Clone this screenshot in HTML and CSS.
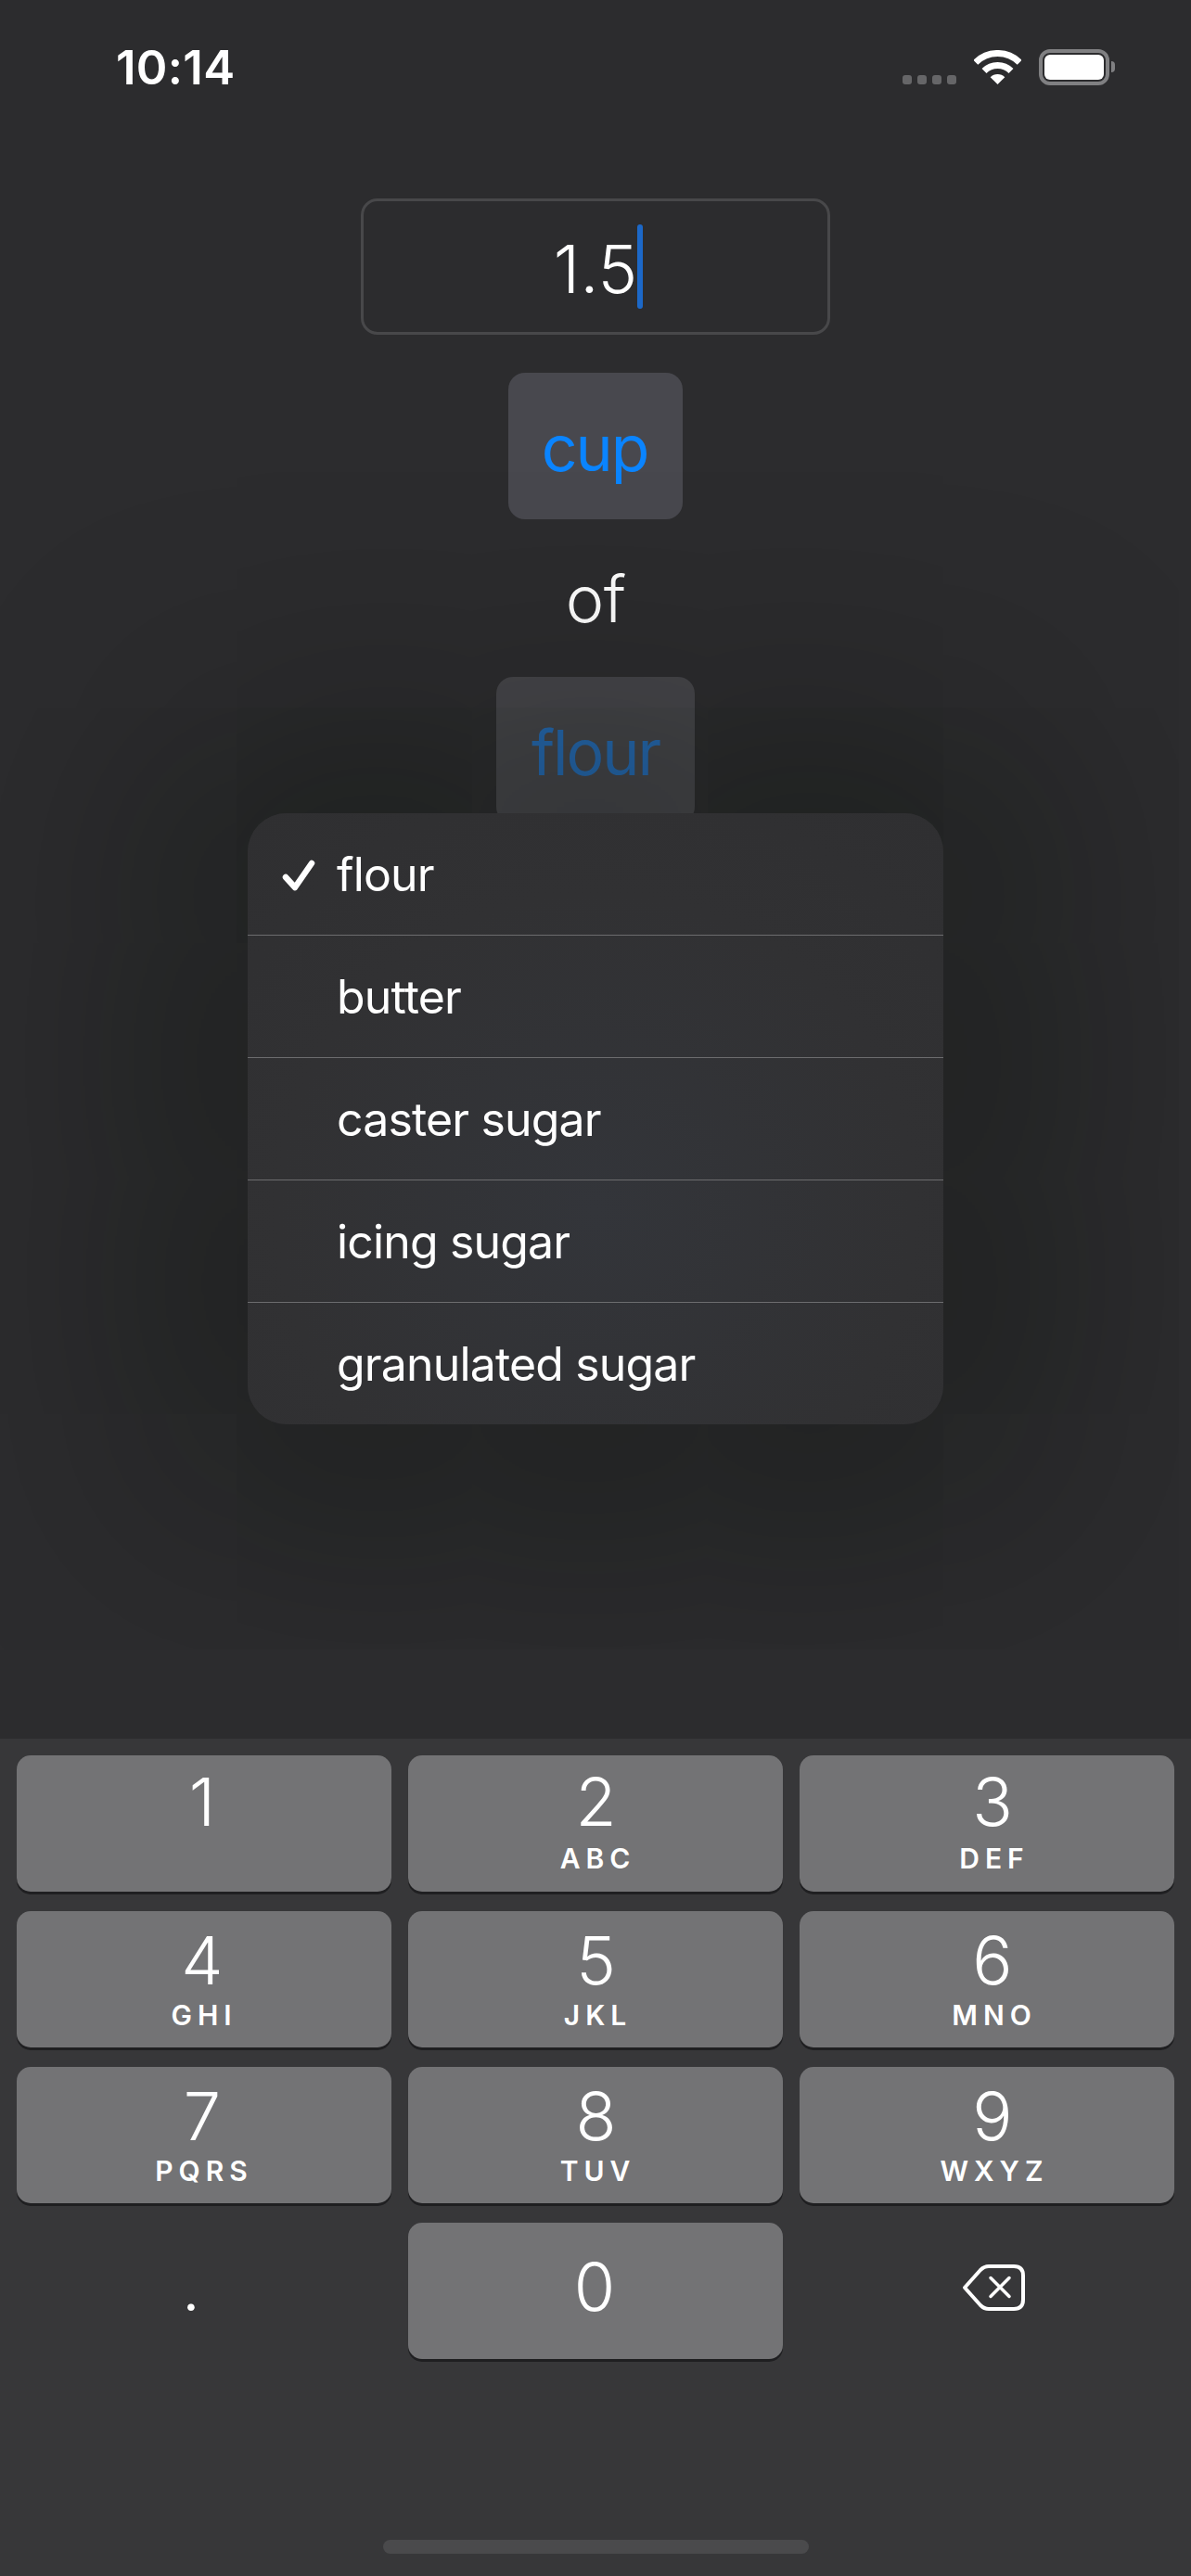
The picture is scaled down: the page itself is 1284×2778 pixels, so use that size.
FILE: index.html
```html
<!DOCTYPE html>
<html lang="en">
<head>
    <meta charset="UTF-8">
    <meta name="viewport" content="width=device-width, initial-scale=1.0">
    <title>Convert ingredient</title>
    <link rel="stylesheet" href="styles.css">
</head>
<body>
    <div class="screen">
        <div class="status-bar">
            <div class="time">10:14</div>
            <div class="status-icons">
                <div class="signal">
                    <span></span><span></span><span></span><span></span>
                </div>
                <svg class="wifi" width="51" height="37" viewBox="0 0 51 37" fill="none">
                    <path d="M1.8 13.3A33.5 33.5 0 0 1 49.2 13.3" stroke="#fff" stroke-width="7"/>
                    <path d="M11 22.5A20.5 20.5 0 0 1 40 22.5" stroke="#fff" stroke-width="7"/>
                    <path d="M25.5 37L17.7 29.2A11 11 0 0 1 33.3 29.2Z" fill="#fff"/>
                </svg>
                <div class="battery"><div class="battery-fill"></div></div>
                <div class="battery-nub"></div>
            </div>
        </div>

        <div class="form">
            <div class="amount-field">
                <span class="amount-value">1.5</span><span class="caret"></span>
            </div>
            <button class="picker-btn">cup</button>
            <div class="of-label">of</div>
            <button class="picker-btn picker-btn-open">flour</button>

            <ul class="menu">
                <li class="menu-row">
                    <svg class="check" width="36" height="34" viewBox="0 0 36 34" fill="none">
                        <path d="M4 19L14 30L32 4" stroke="#fff" stroke-width="6.5" stroke-linecap="round" stroke-linejoin="round"/>
                    </svg>
                    flour
                </li>
                <li class="menu-row">butter</li>
                <li class="menu-row">caster sugar</li>
                <li class="menu-row">icing sugar</li>
                <li class="menu-row">granulated sugar</li>
            </ul>
        </div>

        <div class="keyboard">
            <div class="keys">
                <div class="key"><span class="digit">1</span><span class="letters"></span></div>
                <div class="key key-mid"><span class="digit">2</span><span class="letters">ABC</span></div>
                <div class="key key-end"><span class="digit">3</span><span class="letters">DEF</span></div>
                <div class="key key-low"><span class="digit">4</span><span class="letters">GHI</span></div>
                <div class="key key-low key-mid"><span class="digit">5</span><span class="letters">JKL</span></div>
                <div class="key key-low key-end"><span class="digit">6</span><span class="letters">MNO</span></div>
                <div class="key key-low"><span class="digit">7</span><span class="letters">PQRS</span></div>
                <div class="key key-low key-mid"><span class="digit">8</span><span class="letters">TUV</span></div>
                <div class="key key-low key-end"><span class="digit">9</span><span class="letters">WXYZ</span></div>
                <div class="key key-plain key-dot"><span class="digit">.</span></div>
                <div class="key key-zero"><span class="digit">0</span></div>
                <div class="key key-plain key-back">
                    <svg width="68" height="50" viewBox="0 0 68 50" fill="none">
                        <path d="M3 25L20 6Q24 2 29 2H56Q66 2 66 12V38Q66 48 56 48H29Q24 48 20 44Z" stroke="#fff" stroke-width="4" stroke-linejoin="round"/>
                        <path d="M31 14.5L51 34.5M51 14.5L31 34.5" stroke="#fff" stroke-width="3.5" stroke-linecap="round"/>
                    </svg>
                </div>
            </div>
            <div class="home-bar"></div>
        </div>
    </div>
</body>
</html>
```

FILE: styles.css
```css
* {
    margin: 0;
    padding: 0;
    box-sizing: border-box;
}

body {
    font-family: 'Inter', 'Liberation Sans', sans-serif;
    background-color: #2c2c2e;
    color: #fff;
}

.screen {
    width: 1284px;
    height: 2778px;
    display: flex;
    flex-direction: column;
    overflow: hidden;
}

/* status bar */
.status-bar {
    height: 214px;
    display: flex;
    justify-content: space-between;
    align-items: flex-start;
    padding: 43px 82px 0 125px;
}

.time {
    font-size: 51px;
    font-weight: 600;
    line-height: 60px;
    letter-spacing: 0.3px;
}

.status-icons {
    display: flex;
    align-items: flex-start;
    padding-top: 10px;
}

.signal {
    display: flex;
    gap: 6px;
    margin-top: 28px;
    margin-right: 19px;
}

.signal span {
    width: 10px;
    height: 10px;
    border-radius: 3px;
    background-color: #666668;
}

.wifi {
    margin-top: 1px;
    margin-right: 19px;
}

.battery {
    width: 76px;
    height: 39px;
    border: 4px solid #808082;
    border-radius: 12px;
    padding: 2px;
}

.battery-fill {
    width: 100%;
    height: 100%;
    background-color: #fff;
    border-radius: 6px;
}

.battery-nub {
    width: 4px;
    height: 12px;
    margin-top: 13px;
    margin-left: 2px;
    background-color: #808082;
    border-radius: 0 6px 6px 0;
}

/* form */
.form {
    position: relative;
    flex: 1;
    display: flex;
    flex-direction: column;
    align-items: center;
    gap: 41px;
}

.amount-field {
    width: 506px;
    height: 147px;
    display: flex;
    justify-content: center;
    align-items: center;
    border: 3px solid #48484a;
    border-radius: 18px;
    font-size: 72px;
    font-weight: 350;
}

.amount-value {
    margin-top: 4px;
}

.caret {
    width: 6px;
    height: 91px;
    margin-right: -6px;
    border-radius: 3px;
    background-color: #1c68c8;
}

.picker-btn {
    height: 158px;
    padding: 3px 38px 0 36px;
    border: none;
    border-radius: 18px;
    background-color: #48484e;
    color: #0a84ff;
    font-family: inherit;
    font-size: 68px;
    font-weight: 400;
    letter-spacing: -2px;
}

.picker-btn-open {
    padding: 3px 38px 0;
    background-color: #454549;
    color: #2668ae;
}

.of-label {
    height: 88px;
    line-height: 90px;
    font-size: 70px;
    font-weight: 350;
    letter-spacing: -0.5px;
}

.menu {
    position: absolute;
    top: 663px;
    left: 267px;
    width: 750px;
    list-style: none;
    border-radius: 42px;
    background: radial-gradient(circle at 50% 65%, #33353a 0%, #313133 60%, #2f2f31 100%);
    box-shadow: 0 0 280px 110px rgba(0, 8, 4, 0.32);
}

.menu-row {
    position: relative;
    height: 132px;
    padding-left: 96px;
    display: flex;
    align-items: center;
    border-bottom: 1px solid #6c6c6e;
    font-size: 50px;
    letter-spacing: -0.85px;
}

.menu-row:last-child {
    height: 131px;
    border-bottom: none;
}

.check {
    position: absolute;
    left: 37px;
    top: 50px;
}

/* keyboard */
.keyboard {
    position: relative;
    height: 903px;
    padding: 18px 18px 0;
    background-color: #373739;
}

.keys {
    display: grid;
    grid-template-columns: repeat(3, 404px);
    grid-auto-rows: 147px;
    column-gap: 18px;
    row-gap: 21px;
}

.key {
    display: flex;
    flex-direction: column;
    align-items: center;
    padding-top: 14px;
    border-radius: 15px;
    background-color: #737375;
    box-shadow: 0 3px 0 #1f1f21;
}

.digit {
    margin-right: 4px;
    font-size: 72px;
    font-weight: 350;
    line-height: 72px;
}

.letters {
    height: 30px;
    margin-top: 10px;
    font-size: 30px;
    font-weight: 600;
    line-height: 30px;
    letter-spacing: 6px;
}

.key-mid {
    padding-left: 5px;
}

.key-end {
    padding-left: 16px;
}

.key-low {
    padding-top: 17px;
}

.key-low .letters {
    margin-top: 8px;
}

.key-zero {
    padding-top: 33px;
    padding-left: 2px;
}

.key-plain {
    background: none;
    box-shadow: none;
}

.key-dot {
    padding-top: 33px;
    padding-right: 24px;
}

.key-back {
    padding-top: 45px;
    padding-left: 14px;
}

.home-bar {
    width: 459px;
    height: 15px;
    margin: 195px auto 0;
    border-radius: 8px;
    background-color: #4a4a4c;
}
```
